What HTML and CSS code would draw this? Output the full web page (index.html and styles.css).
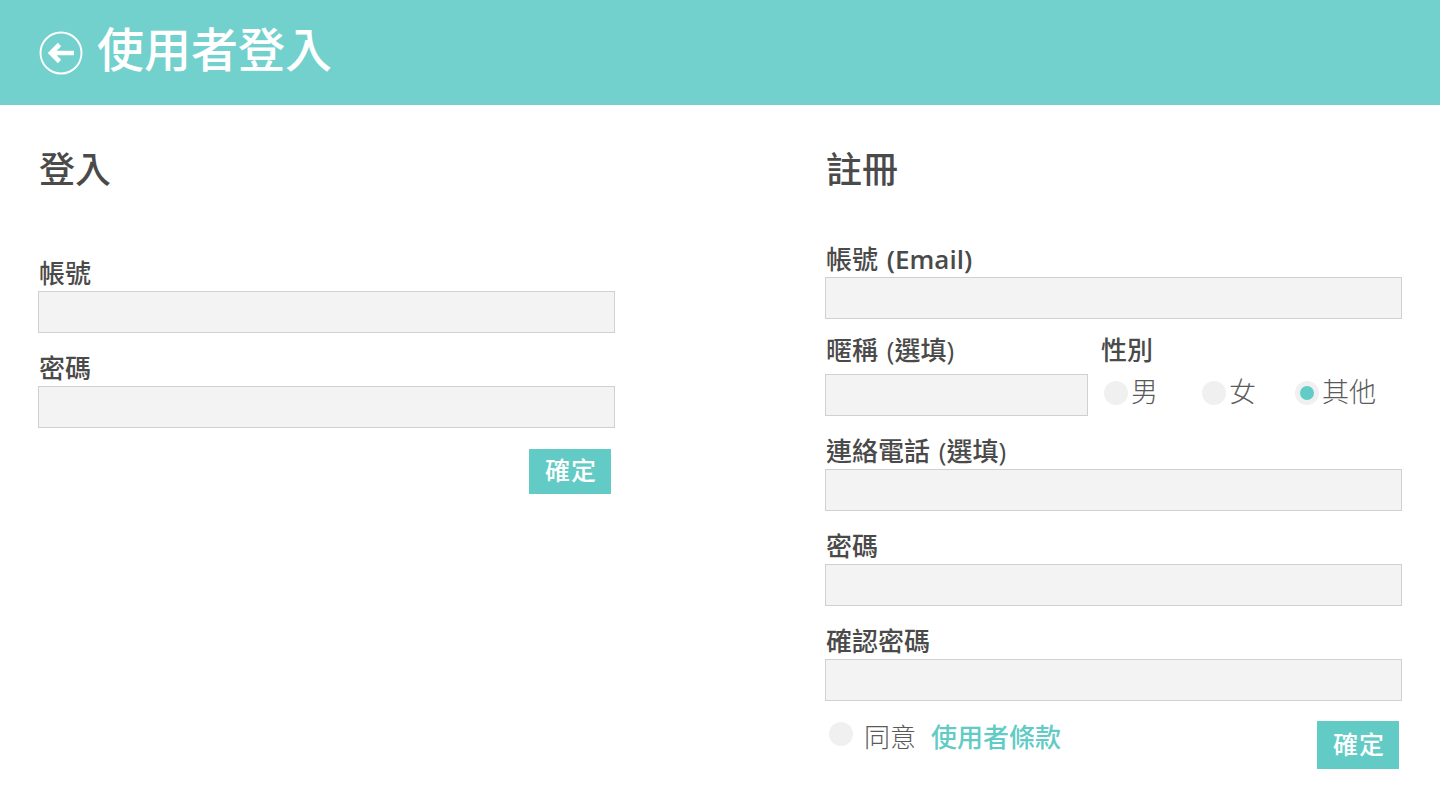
FILE: index.html
```html
<!DOCTYPE html>
<html lang="zh-Hant">
<head>
<meta charset="utf-8">
<title>使用者登入</title>
<link rel="stylesheet" href="styles.css">
</head>
<body>
<header class="topbar">
  <svg class="back" viewBox="0 0 44 44" width="44" height="44" aria-hidden="true">
    <circle cx="22" cy="22" r="20.5" fill="none" stroke="#fff" stroke-width="1.9"/>
    <path d="M12 22H35M20.5 13.5 12 22 20.5 30.5" fill="none" stroke="#fff" stroke-width="4.6"/>
  </svg>
  <h1 class="title">使用者登入</h1>
</header>
<main class="columns">
  <section class="panel">
    <h2 class="heading">登入</h2>
    <div class="login-fields">
      <div class="field"><label class="label">帳號</label><input class="input" type="text"></div>
      <div class="field"><label class="label">密碼</label><input class="input" type="password"></div>
    </div>
    <div class="actions login-actions"><button class="btn">確定</button></div>
  </section>
  <section class="panel">
    <h2 class="heading">註冊</h2>
    <div class="register-fields">
      <div class="field"><label class="label">帳號 <b class="latin">(Email)</b></label><input class="input" type="text"></div>
      <div class="row">
        <div class="nick"><label class="label label-tall">暱稱 (選填)</label><input class="input" type="text"></div>
        <div class="gender">
          <label class="label label-tall">性別</label>
          <div class="radios">
            <span class="radio r-male"><i class="dot"></i>男</span>
            <span class="radio r-female"><i class="dot"></i>女</span>
            <span class="radio"><i class="dot on"></i>其他</span>
          </div>
        </div>
      </div>
      <div class="field"><label class="label">連絡電話 (選填)</label><input class="input" type="text"></div>
      <div class="field"><label class="label">密碼</label><input class="input" type="password"></div>
      <div class="field"><label class="label">確認密碼</label><input class="input" type="password"></div>
    </div>
    <div class="foot">
      <div class="agree"><i class="dot agree-dot"></i><span class="agree-text">同意</span><a class="terms">使用者條款</a></div>
      <button class="btn btn-tall">確定</button>
    </div>
  </section>
</main>
</body>
</html>
```

FILE: styles.css
```css
* { box-sizing: border-box; }
html, body { margin: 0; padding: 0; }
body {
  width: 1440px;
  height: 810px;
  overflow: hidden;
  background: #fff;
  color: #4a4a4a;
  font-family: "Open Sans", "Noto Sans CJK TC", sans-serif;
}
.topbar {
  height: 105px;
  background: #72d1cd;
  display: flex;
  align-items: center;
  padding: 0 0 12px 39px;
  gap: 14px;
}
.back { flex: none; margin-top: 12px; }
.title {
  margin: 0;
  color: #fff;
  font-size: 47px;
  line-height: 60px;
  font-weight: 500;
  font-family: "Noto Sans CJK TC", sans-serif;
}
.columns {
  display: grid;
  grid-template-columns: 577px 577px;
  column-gap: 210px;
  padding: 0 38px;
}
.heading {
  margin: 0;
  padding: 41px 0 0 1px;
  font-size: 36px;
  line-height: 42px;
  font-weight: 500;
  font-family: "Noto Sans CJK TC", sans-serif;
}
.login-fields { margin-top: 69px; }
.register-fields { margin-top: 55px; }
.field { height: 95px; }
.label {
  display: block;
  height: 34px;
  padding-left: 1px;
  font-size: 26px;
  line-height: 33px;
  font-weight: 500;
  word-spacing: 2px;
}
.latin { font-weight: 600; }
.label-tall { height: 40px; line-height: 33px; margin-top: -4px; }
.input {
  display: block;
  width: 100%;
  height: 42px;
  margin: 0;
  padding: 0 8px;
  background: #f3f3f3;
  border: 1px solid #d0d0d0;
  border-radius: 0;
  outline: none;
}
.row { display: flex; height: 97px; }
.nick { width: 263px; flex: none; }
.gender { margin-left: 12px; flex: 1; }
.radios { display: flex; align-items: center; height: 40px; margin-top: -4px; }
.radio {
  display: flex;
  align-items: center;
  font-size: 27px;
  color: #5a5a5a;
  font-weight: 300;
  font-family: "Noto Sans CJK TC", sans-serif;
}
.r-male { width: 102px; padding-left: 4px; }
.r-female { width: 93px; }
.radio .dot { margin-right: 3px; margin-top: 6px; }
.dot {
  display: block;
  flex: none;
  width: 24px;
  height: 24px;
  border-radius: 50%;
  background: #f0f0f0;
  position: relative;
}
.dot.on::after {
  content: "";
  position: absolute;
  left: 5px;
  top: 5px;
  width: 14px;
  height: 14px;
  border-radius: 50%;
  background: #62cbc5;
}
.actions { display: flex; justify-content: flex-end; padding-right: 4px; }
.login-actions { margin-top: 2px; }
.btn {
  width: 82px;
  height: 45px;
  padding: 0 0 6px 2px;
  border: 0;
  border-radius: 0;
  background: #62cbc5;
  color: #fff;
  font-size: 25px;
  font-weight: 500;
  letter-spacing: 1px;
  font-family: "Noto Sans CJK TC", sans-serif;
}
.btn-tall { height: 48px; padding-bottom: 5px; }
.foot {
  display: flex;
  justify-content: space-between;
  align-items: flex-start;
  padding-right: 3px;
  margin-top: 1px;
}
.agree { display: flex; align-items: center; height: 34px; margin-top: -3px; padding-left: 4px; font-family: "Noto Sans CJK TC", sans-serif; }
.agree-dot { margin-top: -2px; }
.agree-text { margin-left: 11px; font-size: 26px; font-weight: 300; color: #5a5a5a; }
.terms { margin-left: 15px; font-size: 26px; font-weight: 500; color: #62cbc5; }
```
